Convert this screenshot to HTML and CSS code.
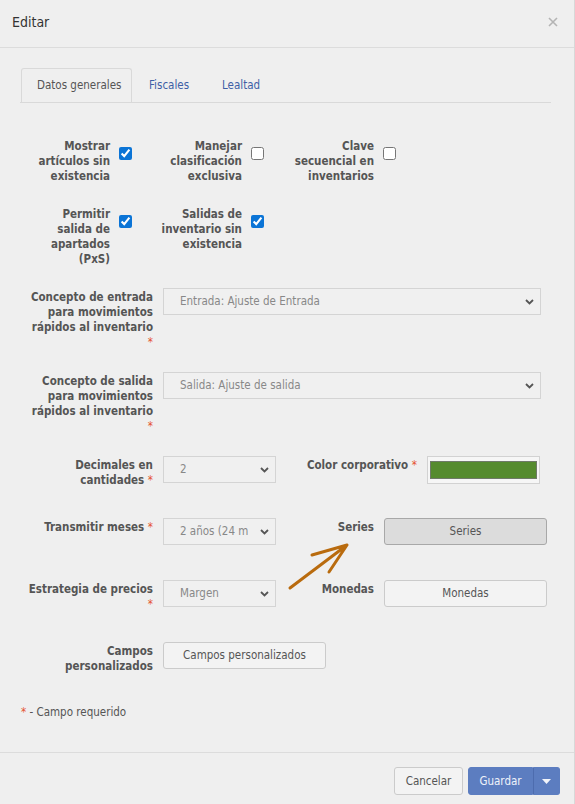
FILE: index.html
```html
<!DOCTYPE html>
<html lang="es">
<head>
  <meta charset="UTF-8">
  <title>Editar</title>
  <link rel="stylesheet" href="styles.css">
</head>
<body>
<div class="modal">
  <div class="modal-header">
    <h4 class="modal-title">Editar</h4>
    <span class="close">
      <svg width="10" height="10" viewBox="0 0 10 10"><path d="M1 1L9 9M9 1L1 9" stroke="#b4b4b4" stroke-width="1.6"/></svg>
    </span>
  </div>

  <div class="modal-body">
    <ul class="tabs">
      <li class="active">Datos generales</li>
      <li><a href="#">Fiscales</a></li>
      <li><a href="#">Lealtad</a></li>
    </ul>

    <div class="checks">
      <label class="check"><span>Mostrar<br>artículos sin<br>existencia</span><input type="checkbox" checked></label>
      <label class="check"><span>Manejar<br>clasificación<br>exclusiva</span><input type="checkbox"></label>
      <label class="check"><span>Clave<br>secuencial en<br>inventarios</span><input type="checkbox"></label>
      <label class="check"><span>Permitir<br>salida de<br>apartados<br>(PxS)</span><input type="checkbox" checked></label>
      <label class="check"><span>Salidas de<br>inventario sin<br>existencia</span><input type="checkbox" checked></label>
    </div>

    <div class="form">
      <div class="row tall">
        <label class="lbl">Concepto de entrada<br>para movimientos<br>rápidos al inventario<br><i class="req">*</i></label>
        <div class="select"><span>Entrada: Ajuste de Entrada</span><svg class="chev" width="9" height="6" viewBox="0 0 9 6"><path d="M1 1l3.5 3.5L8 1" fill="none" stroke="#555" stroke-width="1.8"/></svg></div>
      </div>

      <div class="row tall">
        <label class="lbl">Concepto de salida<br>para movimientos<br>rápidos al inventario<br><i class="req">*</i></label>
        <div class="select"><span>Salida: Ajuste de salida</span><svg class="chev" width="9" height="6" viewBox="0 0 9 6"><path d="M1 1l3.5 3.5L8 1" fill="none" stroke="#555" stroke-width="1.8"/></svg></div>
      </div>

      <div class="row split color-row">
        <label class="lbl">Decimales en<br>cantidades <i class="req">*</i></label>
        <div class="select"><span>2</span><svg class="chev" width="9" height="6" viewBox="0 0 9 6"><path d="M1 1l3.5 3.5L8 1" fill="none" stroke="#555" stroke-width="1.8"/></svg></div>
        <label class="lbl">Color corporativo <i class="req">*</i></label>
        <div class="color"><span class="swatch"></span></div>
      </div>

      <div class="row split">
        <label class="lbl">Transmitir meses <i class="req">*</i></label>
        <div class="select"><span>2 años (24 m</span><svg class="chev" width="9" height="6" viewBox="0 0 9 6"><path d="M1 1l3.5 3.5L8 1" fill="none" stroke="#555" stroke-width="1.8"/></svg></div>
        <label class="lbl">Series</label>
        <button class="btn pressed">Series</button>
      </div>

      <div class="row split">
        <label class="lbl">Estrategia de precios<br><i class="req">*</i></label>
        <div class="select"><span>Margen</span><svg class="chev" width="9" height="6" viewBox="0 0 9 6"><path d="M1 1l3.5 3.5L8 1" fill="none" stroke="#555" stroke-width="1.8"/></svg></div>
        <label class="lbl">Monedas</label>
        <button class="btn">Monedas</button>
      </div>

      <div class="row split">
        <label class="lbl">Campos<br>personalizados</label>
        <button class="btn btn-wide">Campos personalizados</button>
      </div>
    </div>

    <p class="note"><i class="req">*</i> - Campo requerido</p>

    <svg class="arrow" width="70" height="58" viewBox="0 0 70 58">
      <path d="M7 51L64 8M29 18L64 8L46 35" fill="none" stroke="#b96b0e" stroke-width="3" stroke-linecap="round" stroke-linejoin="round"/>
    </svg>
  </div>

  <div class="modal-footer">
    <button class="btn cancel">Cancelar</button>
    <div class="split-btn">
      <button class="btn primary">Guardar</button>
      <button class="btn primary caret"><svg width="9" height="5" viewBox="0 0 9 5"><path d="M0 0h9L4.5 5z" fill="#f2f4fa"/></svg></button>
    </div>
  </div>
</div>
</body>
</html>
```

FILE: styles.css
```css
body {
  margin: 0;
  background: #efefef;
  font: 11.5px/15px "DejaVu Sans Condensed", "DejaVu Sans", sans-serif;
  color: #555;
}

.modal {
  position: relative;
  height: 804px;
  display: flex;
  flex-direction: column;
  border-right: 1px solid #d8d8d8;
  box-sizing: border-box;
}

.modal-header {
  height: 47px;
  border-bottom: 1px solid #dcdcdc;
  display: flex;
  align-items: center;
  justify-content: space-between;
  padding: 0 12px;
}

.modal-title {
  margin: 0 0 2px;
  font-size: 14px;
  font-weight: normal;
  color: #333;
}

.close {
  display: flex;
  margin: 0 4px 4px 0;
}

.modal-body {
  position: relative;
  flex: 1;
  padding: 20px 23px 0 20px;
}

/* pestañas */
.tabs {
  display: flex;
  margin: 0;
  padding: 0;
  list-style: none;
  border-bottom: 1px solid #d9d9d9;
}

.tabs li {
  height: 34px;
  padding: 0 16px 0 17px;
  display: flex;
  align-items: center;
}

.tabs li.active {
  width: 111px;
  box-sizing: border-box;
  border: 1px solid #d9d9d9;
  border-bottom: 0;
  border-radius: 3px 3px 0 0;
  color: #555;
  padding: 0 0 0 15px;
  margin-left: 1px;
}

.tabs a {
  color: #3e5fa6;
  text-decoration: none;
}

/* casillas */
.checks {
  display: grid;
  grid-template-columns: repeat(3, 132px);
  row-gap: 23px;
  margin-top: 36px;
}

.check {
  display: flex;
  align-items: flex-start;
  gap: 9px;
  font-weight: bold;
}

.check span {
  width: 90px;
  text-align: right;
}

.check input {
  width: 13px;
  height: 13px;
  margin: 8px 0 0;
  accent-color: #0b74d6;
}

/* formulario */
.form {
  margin-top: 21px;
}

.row {
  display: grid;
  grid-template-columns: 133px 378px;
  column-gap: 10px;
  align-items: start;
  margin-bottom: 30px;
  min-height: 32px;
}

.row.tall {
  margin-bottom: 22px;
}

.row.split {
  grid-template-columns: 133px 113px 88px 163px;
}

.row.color-row {
  grid-template-columns: 133px 113px 131px 113px;
}

.lbl {
  font-weight: bold;
  text-align: right;
  padding-top: 2px;
}

.req {
  color: #e5532f;
  font-style: normal;
  font-weight: normal;
}

.select {
  height: 27px;
  box-sizing: border-box;
  border: 1px solid #d4d4d4;
  background: #f0f0f0;
  display: flex;
  align-items: center;
  justify-content: space-between;
  padding: 0 6px 0 16px;
  color: #888;
  white-space: nowrap;
  overflow: hidden;
}

.select span {
  overflow: hidden;
}

.chev {
  flex-shrink: 0;
  margin-left: 6px;
}

.color {
  height: 28px;
  box-sizing: border-box;
  border: 1px solid #d2d2d2;
  background: #f6f6f6;
  padding: 4px 2px;
}

.swatch {
  display: block;
  height: 100%;
  box-sizing: border-box;
  background: #558b2e;
  border: 1px solid #6f7a68;
}

.btn {
  height: 27px;
  box-sizing: border-box;
  border: 1px solid #cbcbcb;
  border-radius: 3px;
  background: #f3f3f3;
  color: #555;
  font: inherit;
  padding: 0 12px;
}

.btn.pressed {
  background: #dcdcdc;
  border-color: #a8a8a8;
}

.btn-wide {
  width: 163px;
}

.note {
  margin: 27px 0 0 1px;
  line-height: 16px;
}

.arrow {
  position: absolute;
  left: 283px;
  top: 489px;
}

/* pie */
.modal-footer {
  border-top: 1px solid #dcdcdc;
  padding: 14px 14px 9px;
  display: flex;
  justify-content: flex-end;
  gap: 5px;
}

.modal-footer .btn {
  height: 28px;
  padding: 0;
}

.btn.cancel {
  width: 69px;
}

.split-btn {
  display: flex;
}

.btn.primary {
  width: 65px;
  background: #5c7dc0;
  border-color: #5c7dc0;
  color: #eef2fa;
  border-radius: 3px 0 0 3px;
}

.btn.caret {
  width: 27px;
  border-left-color: #4d6cae;
  border-radius: 0 3px 3px 0;
  display: flex;
  align-items: center;
  justify-content: center;
}
```
